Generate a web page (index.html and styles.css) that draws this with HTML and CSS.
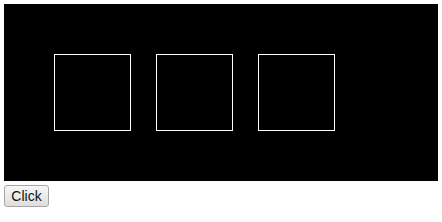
FILE: index.html
```html
<!DOCTYPE html>
<html lang="en">
<head>
  <meta charset="UTF-8">
  <title>Boxes</title>
  <link rel="stylesheet" href="styles.css">
</head>
<body>
  <div class="stage">
    <div class="box"></div>
    <div class="box"></div>
    <div class="box"></div>
  </div>
  <button class="click-btn">Click</button>
</body>
</html>
```

FILE: styles.css
```css
body {
  margin: 4px;
  font-family: 'Liberation Sans', Arial, sans-serif;
  background: #fff;
}
.stage {
  width: 436px;
  height: 177px;
  box-sizing: border-box;
  background: #000;
  display: flex;
  align-items: flex-start;
  gap: 25px;
  padding: 50px;
}
.box {
  width: 77px;
  height: 77px;
  box-sizing: border-box;
  border: 1px solid #fff;
}
.click-btn {
  display: block;
  margin-top: 4px;
  width: 45px;
  height: 22px;
  padding: 0;
  font-family: 'Liberation Sans', Arial, sans-serif;
  font-size: 14px;
  color: #111;
  background: linear-gradient(#f7f7f7, #dedede);
  border: 1px solid #a6a6a6;
  border-radius: 3px;
}
```
